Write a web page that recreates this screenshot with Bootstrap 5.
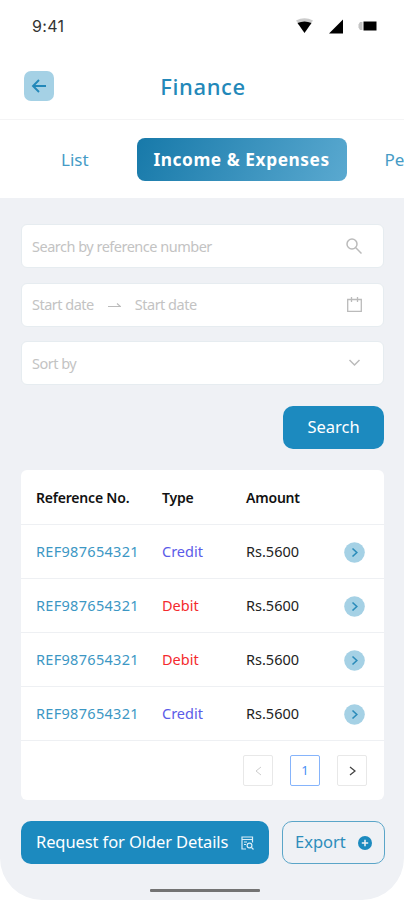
<!DOCTYPE html>
<html lang="en">
<head>
<meta charset="utf-8">
<meta name="viewport" content="width=device-width, initial-scale=1">
<title>Finance</title>
<link href="https://cdn.jsdelivr.net/npm/bootstrap@5.3.0/dist/css/bootstrap.min.css" rel="stylesheet">
<style>
body{background:#fff;font-family:"Noto Sans",sans-serif;color:#222;overflow:hidden}
.phone{width:404px;height:900px;background:#eff1f5;border-radius:0 0 42px 42px;overflow:hidden}
.status-bar{height:52px;padding:0 27px 0 32px;font:400 16px Inter,sans-serif;letter-spacing:.3px;color:#333}
.title-bar{height:68px;padding:0 24px;border-bottom:1px solid #f4f4f5}
.back-btn{width:30px;height:30px;border-radius:7px;background:#a5d1e5}
.page-title{font:500 22px/30px "Noto Sans",sans-serif;letter-spacing:.65px;color:#2388b9;margin:0 0 0 2px}
.title-spacer{width:30px}
.tab-strip{height:78px;font-size:17px;padding:1px 0 0 61px;color:#459bc6}
.tab-strip a{color:inherit;text-decoration:none;white-space:nowrap}
.tab-strip .tab-on{width:210px;height:43px;margin:-1px 38px 0 48px;border-radius:8px;background:linear-gradient(115deg,#1779a9,#5aa9d0);color:#fff;font-weight:700;letter-spacing:.57px}
.tab-strip .tab-on span{font-size:17.3px;padding-top:1px}
.filters{padding:26px 20px 0 21px}
.field-stack{gap:14.5px}
.field{height:44px;border-radius:6px;background:#fff;border:1px solid #e6ecf0;padding:0 21px 0 10px;font-size:14.500px;letter-spacing:-.5px;color:#c3c3c3}
.field span{padding-top:1px}
.range-arrow{margin:0 14px}
.cta{height:43px;border-radius:10px;font-size:16.500px;background:#1c8abf;color:#fff;border:0;padding:0}
.cta-search{width:101px;margin-top:21px}
.cta-request{width:248px;padding:0 15px;letter-spacing:-.1px}
.ledger{margin:21px 20px 0 21px;height:330px;background:#fff;border-radius:6px}
.ledger-row{height:54px;border-bottom:1px solid #eef0f3;display:grid;grid-template-columns:126px 84px 1fr 22px;align-items:center;padding:1px 18px 0 15px;font-size:14.500px}
.ledger-row.head-row{height:55px;color:#111;font-weight:600;font-size:14px;letter-spacing:-.2px;padding-top:0}
.ref-no{color:#3c97c4;letter-spacing:.3px}.credit{color:#5b5be8}.debit{color:#f42a2e}
.pager{gap:17px;padding:14px 17px 0}
.pg{width:30px;height:31px;border:1px solid #e8e8e8;border-radius:2px;font-size:13px}
.pg-on{border-color:#86b4fb;color:#4b8ff5}
.footer-actions{padding:21px 19px 0 21px}
.cta-outline{width:103px;padding:0 12px;background:transparent;border:1px solid #5aa5c8;color:#2e8dbb}
.home-bar{width:110px;height:3px;background:#737373;margin:25px 0 0 150px;border-radius:1px}
</style>
</head>
<body>
<main class="phone d-flex flex-column">
<div class="bg-white">
<div class="status-bar d-flex align-items-center justify-content-between"><span>9:41</span>
<svg width="82" height="18" viewBox="0 0 82 18"><path d="M1 3.500Q9.500-1 18 3.500L15 8H4Z" fill="#ccc"/><path d="M2.500 6Q9.500 3 16.500 6L9.500 16Z"/><path d="M34 16.500L48 2.500V16.500Z"/><path d="M67.500 5H65L63.500 7.500V10.500L65 13H67.500Z" fill="#c4c4c4"/><path d="M68.500 4.500H81.500V13.500H68.500Z"/></svg></div>
<header class="title-bar d-flex align-items-center justify-content-between">
<a href="#" class="back-btn d-flex align-items-center justify-content-center" aria-label="Back"><svg width="16" height="14" fill="none" stroke="#2388b9" stroke-width="1.900"><path d="M15 7H2M8 1L2 7L8 13"/></svg></a>
<h1 class="page-title">Finance</h1><span class="title-spacer"></span></header>
<nav class="tab-strip d-flex align-items-center overflow-hidden"><a href="#">List</a><a href="#" class="tab-on d-flex align-items-center justify-content-center flex-shrink-0"><span>Income &amp; Expenses</span></a><a href="#">Pe</a></nav>
</div>
<section class="filters">
<div class="field-stack d-flex flex-column">
<div class="field d-flex align-items-center justify-content-between"><span>Search by reference number</span><svg width="16" height="16" fill="none" stroke="#bbb" stroke-width="1.500"><circle cx="6" cy="6" r="5"/><path d="M9.800 9.800L15.500 15.500"/></svg></div>
<div class="field d-flex align-items-center"><span>Start date</span><svg class="range-arrow" width="13" height="6" fill="none" stroke="#bbb" stroke-width="1.200"><path d="M0 4.500H12.500L9 1.500"/></svg><span>Start date</span><svg class="ms-auto" width="15" height="15" fill="none" stroke="#bbb" stroke-width="1.300"><path d="M.7 2.500H14.300V14.300H.7ZM4.500 0V5M10.500 0V5"/></svg></div>
<div class="field d-flex align-items-center justify-content-between"><span>Sort by</span><svg width="16" height="9" fill="none" stroke="#bbb" stroke-width="1.500"><path d="M3.500 1L8.500 6L13.500 1"/></svg></div>
</div>
<div class="d-flex justify-content-end"><button class="cta cta-search">Search</button></div>
</section>
<section class="ledger">
<div class="ledger-row head-row"><span>Reference No.</span><span>Type</span><span>Amount</span></div>
<div class="ledger-row"><span class="ref-no">REF987654321</span><span class="credit">Credit</span><span>Rs.5600</span><svg width="21" height="21" fill="none" stroke="#2b8cba" stroke-width="1.600"><circle cx="10.500" cy="10.500" r="10.300" fill="#a5d1e5" stroke="none"/><path d="M8.500 6.500L12.800 10.500L8.500 14.500"/></svg></div>
<div class="ledger-row"><span class="ref-no">REF987654321</span><span class="debit">Debit</span><span>Rs.5600</span><svg width="21" height="21" fill="none" stroke="#2b8cba" stroke-width="1.600"><circle cx="10.500" cy="10.500" r="10.300" fill="#a5d1e5" stroke="none"/><path d="M8.500 6.500L12.800 10.500L8.500 14.500"/></svg></div>
<div class="ledger-row"><span class="ref-no">REF987654321</span><span class="debit">Debit</span><span>Rs.5600</span><svg width="21" height="21" fill="none" stroke="#2b8cba" stroke-width="1.600"><circle cx="10.500" cy="10.500" r="10.300" fill="#a5d1e5" stroke="none"/><path d="M8.500 6.500L12.800 10.500L8.500 14.500"/></svg></div>
<div class="ledger-row"><span class="ref-no">REF987654321</span><span class="credit">Credit</span><span>Rs.5600</span><svg width="21" height="21" fill="none" stroke="#2b8cba" stroke-width="1.600"><circle cx="10.500" cy="10.500" r="10.300" fill="#a5d1e5" stroke="none"/><path d="M8.500 6.500L12.800 10.500L8.500 14.500"/></svg></div>
<div class="pager d-flex justify-content-end"><span class="pg d-flex align-items-center justify-content-center"><svg width="7" height="10" fill="none" stroke="#ccc"><path d="M6 1L1 5L6 9"/></svg></span><span class="pg pg-on d-flex align-items-center justify-content-center">1</span><span class="pg d-flex align-items-center justify-content-center"><svg width="7" height="10" fill="none" stroke="#444" stroke-width="1.300"><path d="M1 1L6 5L1 9"/></svg></span></div>
</section>
<footer class="footer-actions d-flex justify-content-between">
<button class="cta cta-request d-flex align-items-center justify-content-between"><span>Request for Older Details</span><svg width="13" height="14" fill="none" stroke="#d9edf7" stroke-width="1.200"><path d="M5 13H1V1H11.500V6.500M1 3.500H11.500M3 6H6M3 8.500H5M10.500 11.500L12.500 13.500"/><circle cx="8.500" cy="9.500" r="2.400"/></svg></button>
<button class="cta cta-outline d-flex align-items-center justify-content-between"><span>Export</span><svg width="14" height="14" stroke="#eff1f5" stroke-width="1.500"><circle cx="7" cy="7" r="7" fill="#1c8abf" stroke="none"/><path d="M7 3.800V10.200M3.800 7H10.200"/></svg></button>
</footer>
<div class="home-bar"></div>
</main>
<script src="https://cdn.jsdelivr.net/npm/bootstrap@5.3.0/dist/js/bootstrap.bundle.min.js"></script>
</body>
</html>
